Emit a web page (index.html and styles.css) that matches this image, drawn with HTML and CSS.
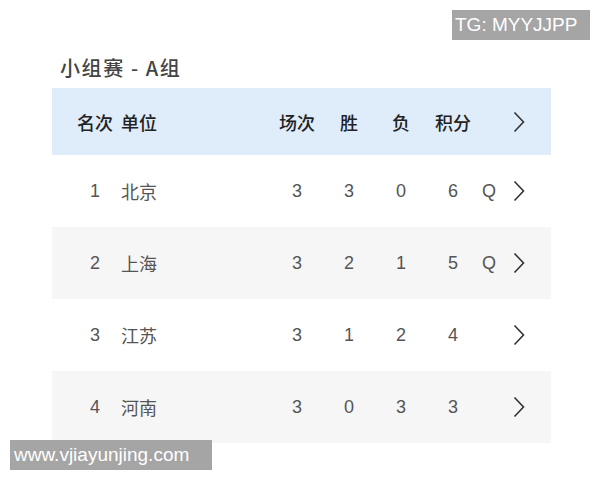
FILE: index.html
```html
<!DOCTYPE html>
<html lang="zh">
<head>
<meta charset="utf-8">
<link rel="stylesheet" href="styles.css">
</head>
<body>
<div class="page">
  <h1 class="title">小组赛 - A组</h1>
  <div class="table">
    <div class="row head">
      <span class="rank">名次</span><span class="name">单位</span>
      <span class="c">场次</span><span class="c">胜</span><span class="c">负</span><span class="c">积分</span>
      <span class="q"></span>
      <span class="chev"><svg width="12" height="22" viewBox="0 0 12 22"><polyline points="1.5,1.5 10.5,11 1.5,20.5" fill="none" stroke="#333" stroke-width="1.6"/></svg></span>
    </div>
    <div class="row">
      <span class="rank">1</span><span class="name">北京</span>
      <span class="c">3</span><span class="c">3</span><span class="c">0</span><span class="c">6</span>
      <span class="q">Q</span>
      <span class="chev"><svg width="12" height="22" viewBox="0 0 12 22"><polyline points="1.5,1.5 10.5,11 1.5,20.5" fill="none" stroke="#333" stroke-width="1.6"/></svg></span>
    </div>
    <div class="row alt">
      <span class="rank">2</span><span class="name">上海</span>
      <span class="c">3</span><span class="c">2</span><span class="c">1</span><span class="c">5</span>
      <span class="q">Q</span>
      <span class="chev"><svg width="12" height="22" viewBox="0 0 12 22"><polyline points="1.5,1.5 10.5,11 1.5,20.5" fill="none" stroke="#333" stroke-width="1.6"/></svg></span>
    </div>
    <div class="row">
      <span class="rank">3</span><span class="name">江苏</span>
      <span class="c">3</span><span class="c">1</span><span class="c">2</span><span class="c">4</span>
      <span class="q"></span>
      <span class="chev"><svg width="12" height="22" viewBox="0 0 12 22"><polyline points="1.5,1.5 10.5,11 1.5,20.5" fill="none" stroke="#333" stroke-width="1.6"/></svg></span>
    </div>
    <div class="row alt">
      <span class="rank">4</span><span class="name">河南</span>
      <span class="c">3</span><span class="c">0</span><span class="c">3</span><span class="c">3</span>
      <span class="q"></span>
      <span class="chev"><svg width="12" height="22" viewBox="0 0 12 22"><polyline points="1.5,1.5 10.5,11 1.5,20.5" fill="none" stroke="#333" stroke-width="1.6"/></svg></span>
    </div>
  </div>
</div>
<div class="wm wm-top">TG: MYYJJPP</div>
<div class="wm wm-bottom">www.vjiayunjing.com</div>
</body>
</html>
```

FILE: styles.css
```css
html, body {
  margin: 0;
  padding: 0;
  background: #ffffff;
}
body {
  width: 600px;
  height: 480px;
  position: relative;
  overflow: hidden;
  font-family: "Liberation Sans", "Noto Sans CJK SC", sans-serif;
}
.page {
  padding: 61px 49px 0 52px;
}
.title {
  margin: 0 0 13px 8px;
  font-family: "Noto Sans CJK SC", sans-serif;
  font-size: 20px;
  line-height: 28px;
  font-weight: 500;
  letter-spacing: 1.6px;
  color: #444;
  height: 14px;
  display: flex;
  align-items: center;
}
.table {
  width: 499px;
}
.row {
  display: grid;
  grid-template-columns: 36px 1fr 52px 52px 52px 52px 20px 40px;
  align-items: center;
  height: 72px;
  padding: 0 12px 0 25px;
  font-size: 18px;
  color: #555;
  background: #ffffff;
}
.row.alt {
  background: #f6f6f6;
}
.row.head {
  height: 67px;
  background: #dfecfa;
  color: #222;
  font-family: "Noto Sans CJK SC", sans-serif;
  font-size: 18px;
  font-weight: 500;
}
.rank {
  text-align: center;
}
.head .rank {
  text-align: left;
}
.name {
  padding-left: 8px;
  font-family: "Noto Sans CJK SC", sans-serif;
  font-size: 18px;
}
.c {
  text-align: center;
  white-space: nowrap;
}
.q {
  text-align: center;
}
.chev {
  display: flex;
  justify-content: center;
  align-items: center;
}
.chev svg {
  display: block;
}
.wm {
  position: absolute;
  background: #a5a5a5;
  color: #ffffff;
  font-family: "Liberation Sans", sans-serif;
  font-size: 19px;
  line-height: 30px;
  height: 30px;
  box-sizing: border-box;
  white-space: nowrap;
}
.wm-top {
  left: 452px;
  top: 10px;
  width: 138px;
  padding-left: 3px;
}
.wm-bottom {
  left: 10px;
  top: 440px;
  width: 202px;
  padding-left: 4px;
}
```
